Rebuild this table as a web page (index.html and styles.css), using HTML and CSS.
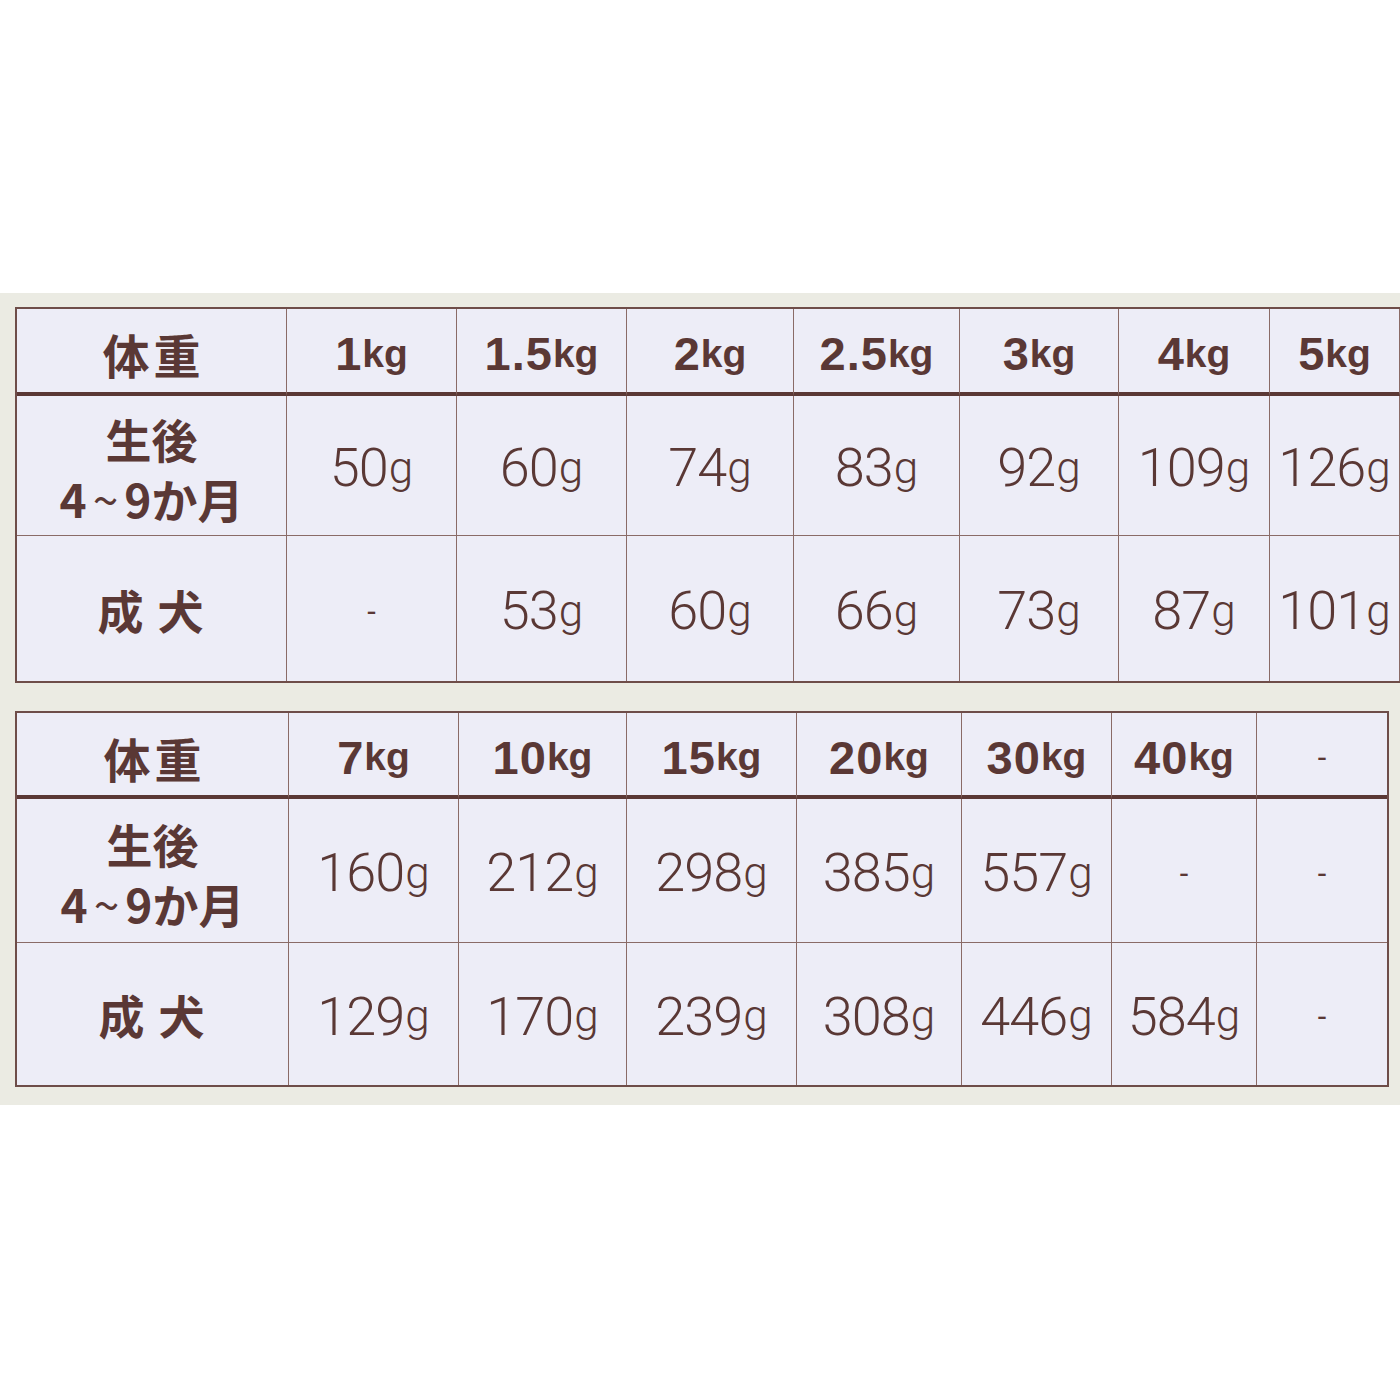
FILE: index.html
```html
<!DOCTYPE html>
<html lang="ja">
<head>
<meta charset="utf-8">
<link rel="stylesheet" href="styles.css">
</head>
<body>
<div class="band">
  <div class="table t1">
    <div class="cell head label">体重</div>
    <div class="cell head"><span class="n">1</span><span class="u">kg</span></div>
    <div class="cell head"><span class="n">1.5</span><span class="u">kg</span></div>
    <div class="cell head"><span class="n">2</span><span class="u">kg</span></div>
    <div class="cell head"><span class="n">2.5</span><span class="u">kg</span></div>
    <div class="cell head"><span class="n">3</span><span class="u">kg</span></div>
    <div class="cell head"><span class="n">4</span><span class="u">kg</span></div>
    <div class="cell head"><span class="n">5</span><span class="u">kg</span></div>
    <div class="cell head"></div>

    <div class="cell label two"><span class="ln">生後</span><span class="ln">4<span class="tl">~</span>9か月</span></div>
    <div class="cell val"><span class="n">50</span><span class="g">g</span></div>
    <div class="cell val"><span class="n">60</span><span class="g">g</span></div>
    <div class="cell val"><span class="n">74</span><span class="g">g</span></div>
    <div class="cell val"><span class="n">83</span><span class="g">g</span></div>
    <div class="cell val"><span class="n">92</span><span class="g">g</span></div>
    <div class="cell val"><span class="n">109</span><span class="g">g</span></div>
    <div class="cell val"><span class="n">126</span><span class="g">g</span></div>
    <div class="cell val"></div>

    <div class="cell label wide">成犬</div>
    <div class="cell val dash">-</div>
    <div class="cell val"><span class="n">53</span><span class="g">g</span></div>
    <div class="cell val"><span class="n">60</span><span class="g">g</span></div>
    <div class="cell val"><span class="n">66</span><span class="g">g</span></div>
    <div class="cell val"><span class="n">73</span><span class="g">g</span></div>
    <div class="cell val"><span class="n">87</span><span class="g">g</span></div>
    <div class="cell val"><span class="n">101</span><span class="g">g</span></div>
    <div class="cell val"></div>
  </div>

  <div class="table t2">
    <div class="cell head label">体重</div>
    <div class="cell head"><span class="n">7</span><span class="u">kg</span></div>
    <div class="cell head"><span class="n">10</span><span class="u">kg</span></div>
    <div class="cell head"><span class="n">15</span><span class="u">kg</span></div>
    <div class="cell head"><span class="n">20</span><span class="u">kg</span></div>
    <div class="cell head"><span class="n">30</span><span class="u">kg</span></div>
    <div class="cell head"><span class="n">40</span><span class="u">kg</span></div>
    <div class="cell head dash">-</div>

    <div class="cell label two"><span class="ln">生後</span><span class="ln">4<span class="tl">~</span>9か月</span></div>
    <div class="cell val"><span class="n">160</span><span class="g">g</span></div>
    <div class="cell val"><span class="n">212</span><span class="g">g</span></div>
    <div class="cell val"><span class="n">298</span><span class="g">g</span></div>
    <div class="cell val"><span class="n">385</span><span class="g">g</span></div>
    <div class="cell val"><span class="n">557</span><span class="g">g</span></div>
    <div class="cell val dash">-</div>
    <div class="cell val dash">-</div>

    <div class="cell label wide">成犬</div>
    <div class="cell val"><span class="n">129</span><span class="g">g</span></div>
    <div class="cell val"><span class="n">170</span><span class="g">g</span></div>
    <div class="cell val"><span class="n">239</span><span class="g">g</span></div>
    <div class="cell val"><span class="n">308</span><span class="g">g</span></div>
    <div class="cell val"><span class="n">446</span><span class="g">g</span></div>
    <div class="cell val"><span class="n">584</span><span class="g">g</span></div>
    <div class="cell val dash">-</div>
  </div>
</div>
</body>
</html>
```
FILE: styles.css
```css
html, body {
  margin: 0;
  padding: 0;
  background: #ffffff;
  width: 1400px;
  height: 1400px;
  overflow: hidden;
}
body {
  padding-top: 293px;
  box-sizing: border-box;
}
.band {
  background: #ebebe3;
  height: 812px;
  padding: 14px 0 0 15px;
  box-sizing: border-box;
  display: flex;
  flex-direction: column;
  gap: 28px;
  overflow: hidden;
}
.table {
  display: grid;
  background: #ededf7;
  border: 2px solid #6e4d49;
  color: #5a3835;
  font-family: "Liberation Sans", "Noto Sans CJK JP", sans-serif;
}
.t1 {
  width: 1500px;
  grid-template-columns: 270px 170px 170px 167px 166px 159px 151px 130px 1fr;
  grid-template-rows: 87px 140px 145px;
}
.t2 {
  width: 1370px;
  grid-template-columns: 272px 170px 168px 170px 165px 150px 145px 1fr;
  grid-template-rows: 86px 144px 142px;
}
.cell {
  display: flex;
  align-items: center;
  justify-content: center;
  border-right: 1px solid #8a6b67;
  box-sizing: border-box;
}
.t1 .cell:nth-child(9n), .t2 .cell:nth-child(8n) {
  border-right: none;
}
.head {
  border-bottom: 4px solid #5a3835;
  font-weight: bold;
  padding-top: 6px;
}
.t1 .cell:nth-child(n+10):nth-child(-n+18),
.t2 .cell:nth-child(n+9):nth-child(-n+16) {
  border-bottom: 1px solid #8a6b67;
}
.head .n {
  font-size: 47px;
  letter-spacing: 1px;
}
.head .u {
  font-size: 39px;
}
.label {
  font-family: "Noto Sans CJK JP", sans-serif;
  font-weight: bold;
  font-size: 46px;
  text-align: center;
  line-height: 1;
}
.head.label {
  font-size: 47px;
  letter-spacing: 4px;
  padding-left: 4px;
}
.two {
  flex-direction: column;
  gap: 14px;
  padding-top: 4px;
}
.ln {
  display: block;
  white-space: nowrap;
}
.tl {
  display: inline-block;
  margin: 0 6px;
  font-weight: normal;
}
.wide {
  letter-spacing: 14px;
  padding-left: 12px;
}
.val {
  font-family: "Roboto", "Liberation Sans", sans-serif;
  font-weight: 300;
  padding-top: 4px;
}
.val .n {
  font-size: 54px;
  letter-spacing: -1px;
}
.val .g {
  font-size: 44px;
  margin-left: 1px;
}
.dash {
  font-family: "Liberation Sans", sans-serif;
  font-weight: normal;
  font-size: 30px;
}
.head.dash {
  font-size: 30px;
  font-weight: normal;
}
```
